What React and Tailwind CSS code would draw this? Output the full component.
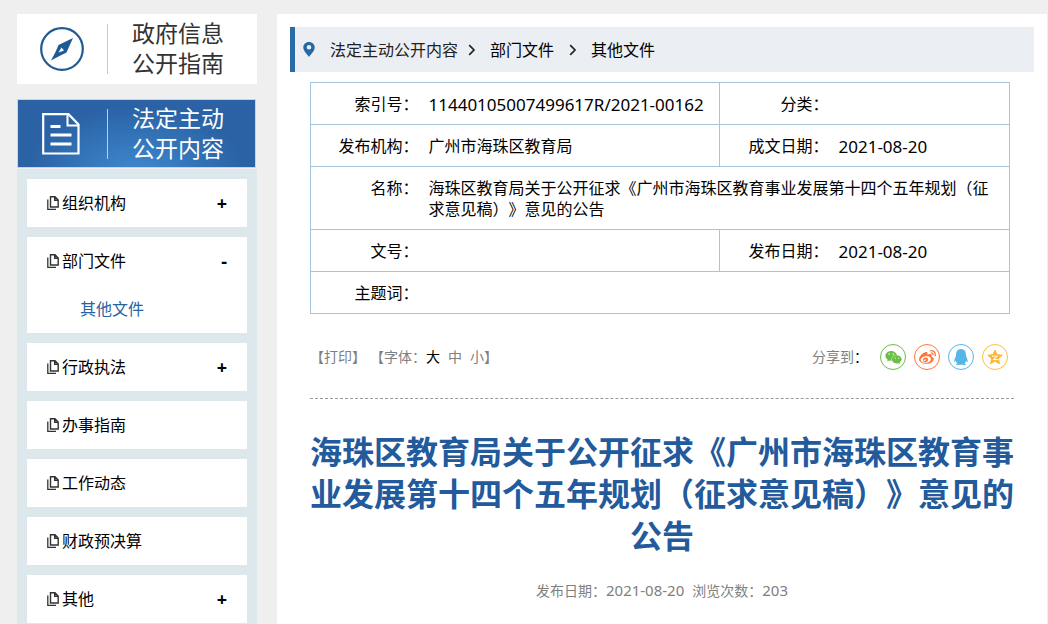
import React from "react";
import { FaQq, FaWeibo, FaWeixin } from "react-icons/fa";

const menu = [
  { label: "组织机构", sign: "+" },
  { label: "部门文件", sign: "-", children: ["其他文件"] },
  { label: "行政执法", sign: "+" },
  { label: "办事指南" },
  { label: "工作动态" },
  { label: "财政预决算" },
  { label: "其他", sign: "+" },
];

function CompassIcon() {
  return (
    <svg viewBox="0 0 44 44" className="h-11 w-11" aria-hidden="true">
      <circle cx="22" cy="22" r="20.8" fill="none" stroke="#1f5a93" strokeWidth="2.2" />
      <path
        fillRule="evenodd"
        fill="#1f5a93"
        d="M33 11 L26.500 25.5 L19.500 29 L11 33.5 L15.500 25 L18.500 18 Z M21.500 20.500 L18.500 25.500 L24 23.500 Z"
      />
    </svg>
  );
}

function DocumentIcon() {
  return (
    <svg viewBox="0 0 38 42" className="h-[42px] w-[38px]" fill="none" stroke="#fff" aria-hidden="true">
      <path strokeWidth="2.2" d="M1.200 1.200 H26.500 L36.500 11.500 V40.500 H1.200 Z" />
      <path strokeWidth="2" d="M25.500 1.500 V12.500 H36" />
      <path strokeWidth="3" d="M8.500 13.500 H18.500 M8.500 22 H29.500 M8.500 31 H29.500" />
    </svg>
  );
}

function CopyIcon() {
  return (
    <svg viewBox="0 0 12 14" className="h-3.5 w-3 shrink-0" fill="none" stroke="#333" aria-hidden="true">
      <path strokeWidth="1.400" d="M3.500 0.800 H8 L11.200 4 V11 H3.500 Z M7.700 0.800 V4.300 H11.200" />
      <path strokeWidth="1.300" d="M0.800 3.500 V13.300 H9" />
    </svg>
  );
}

function PinIcon() {
  return (
    <svg viewBox="0 0 12 15" className="h-[15px] w-3" aria-hidden="true">
      <path
        fill="#2568a5"
        fillRule="evenodd"
        d="M6 0 C2.700 0 0.300 2.400 0.300 5.500 C0.300 9 4 12 6 15 C8 12 11.700 9 11.700 5.500 C11.700 2.400 9.300 0 6 0 Z M6 3 A2.300 2.300 0 1 1 6 7.600 A2.300 2.300 0 1 1 6 3 Z"
      />
    </svg>
  );
}

function Chevron() {
  return (
    <svg viewBox="0 0 8 12" className="h-3 w-2" fill="none" stroke="#222" strokeWidth="1.700" aria-hidden="true">
      <path d="M1.200 1.200 L6 6 L1.200 10.800" />
    </svg>
  );
}

function QzoneIcon() {
  return (
    <svg viewBox="0 0 16 16" className="h-4 w-4" aria-hidden="true">
      <path
        fill="#fdb732"
        stroke="#fdb732"
        strokeLinejoin="round"
        d="M8 1 L10 5.700 L15.200 6.200 L11.300 9.700 L12.500 14.800 L8 12.100 L3.500 14.800 L4.700 9.700 L0.800 6.200 L6 5.700 Z"
      />
      <path fill="none" stroke="#fff" strokeWidth="1" d="M5 7.200 H10.400 L6.200 10.600 H11.500" />
    </svg>
  );
}

function MenuItem({ item }) {
  return (
    <li className="bg-white">
      <button type="button" className="flex h-12 w-full items-center gap-[3px] px-5 text-left text-black">
        <CopyIcon />
        <span className="flex-1">{item.label}</span>
        {item.sign && <span className="text-lg font-bold">{item.sign}</span>}
      </button>
      {item.children?.map((child) => (
        <a key={child} href="#child" className="flex h-12 items-center pl-[53px] text-[#2763a3]">
          {child}
        </a>
      ))}
    </li>
  );
}

function Field({ label, children, span, numeric }) {
  return (
    <>
      <th
        scope="row"
        className="border-y border-l border-[#a5c5de] pt-[11px] pb-[9px] text-right align-top font-normal"
      >
        {label}：
      </th>
      <td
        colSpan={span}
        className={`border-y border-r border-[#a5c5de] px-2.5 pt-[11px] pb-[9px] align-top ${numeric ? "text-[17px]" : ""}`}
      >
        {children}
      </td>
    </>
  );
}

function Share({ label, className, children }) {
  return (
    <a
      href="#share"
      aria-label={label}
      className={`flex h-[26px] w-[26px] items-center justify-center rounded-full border ${className}`}
    >
      {children}
    </a>
  );
}

export default function App() {
  return (
    <div className="flex min-h-screen gap-5 bg-[#efefef] pt-3.5 pr-px pl-[17px] font-['Noto_Sans','Noto_Sans_CJK_SC',sans-serif] text-base text-black [text-spacing-trim:space-all]">
      <aside className="flex w-60 shrink-0 flex-col">
        <a href="#guide" className="flex h-[70px] items-center bg-white text-[23px] leading-[30px] text-[#333]">
          <span className="flex w-[90px] justify-center">
            <CompassIcon />
          </span>
          <span className="h-[50px] w-px bg-[#c8c8c8]" />
          <span className="pb-0.5 pl-6">
            政府信息
            <br />
            公开指南
          </span>
        </a>
        <a
          href="#content"
          className="mt-[15px] mr-px flex h-[69px] items-center border border-[#c3d6ea] bg-[#2a62a5] bg-[radial-gradient(ellipse_at_50%_110%,#3f89cf_0%,#2a62a5_65%)] text-[23px] leading-[30px] text-white"
        >
          <span className="flex w-[89px] justify-center pr-1">
            <DocumentIcon />
          </span>
          <span className="h-[50px] w-px bg-[#b9d0e8]" />
          <span className="pb-0.5 pl-6">
            法定主动
            <br />
            公开内容
          </span>
        </a>
        <ul className="mt-px flex flex-1 flex-col gap-2.5 bg-[#dde8ed] px-2.5 pt-2.5">
          {menu.map((item) => (
            <MenuItem key={item.label} item={item} />
          ))}
        </ul>
      </aside>

      <main className="min-w-0 flex-1 bg-white px-[13px] pt-[13px]">
        <nav className="flex h-[45px] items-center border-l-[5px] border-[#2a6aa8] bg-[#ebeef2] pl-2 text-[#222]">
          <PinIcon />
          <a href="#a" className="ml-[15px]">
            法定主动公开内容
          </a>
          <span className="mr-3.5 ml-2.5">
            <Chevron />
          </span>
          <a href="#b" className="text-black">
            部门文件
          </a>
          <span className="mr-3.5 ml-[15px]">
            <Chevron />
          </span>
          <a href="#c" className="text-black">
            其他文件
          </a>
        </nav>

        <div className="px-5 pt-2.5">
          <div className="pr-1">
            <table className="w-full table-fixed border-collapse leading-[21px]">
              <colgroup>
                <col className="w-[108px]" />
                <col />
                <col className="w-[109px]" />
                <col className="w-[181px]" />
              </colgroup>
              <tbody>
                <tr>
                  <Field label="索引号" numeric>
                    11440105007499617R/2021-00162
                  </Field>
                  <Field label="分类" />
                </tr>
                <tr>
                  <Field label="发布机构">广州市海珠区教育局</Field>
                  <Field label="成文日期" numeric>
                    2021-08-20
                  </Field>
                </tr>
                <tr>
                  <Field label="名称" span={3}>
                    海珠区教育局关于公开征求《广州市海珠区教育事业发展第十四个五年规划（征求意见稿）》意见的公告
                  </Field>
                </tr>
                <tr>
                  <Field label="文号" />
                  <Field label="发布日期" numeric>
                    2021-08-20
                  </Field>
                </tr>
                <tr>
                  <Field label="主题词" span={3} />
                </tr>
              </tbody>
            </table>
          </div>

          <div className="mt-[30px] flex h-[55px] items-start justify-between border-b border-dashed border-[#999] pr-1.5 text-sm leading-[26px] text-[#808080]">
            <div className="flex">
              <button type="button">【打印】</button>
              <span className="ml-1">【字体：</span>
              <button type="button" className="text-black">
                大
              </button>
              <button type="button" className="mx-2">
                中
              </button>
              <button type="button">小</button>
              <span>】</span>
            </div>
            <div className="flex gap-2">
              <span className="mr-1">
                分享到<span className="text-black">：</span>
              </span>
              <Share label="微信" className="border-[#6cbd45] text-[#6cbd45]">
                <FaWeixin size={17} />
              </Share>
              <Share label="微博" className="border-[#ff763b] text-[#ff763b]">
                <FaWeibo size={17} />
              </Share>
              <Share label="QQ" className="border-[#56b6e7] text-[#56b6e7]">
                <FaQq size={16} />
              </Share>
              <Share label="QQ空间" className="border-[#fdbe3d]">
                <QzoneIcon />
              </Share>
            </div>
          </div>

          <h1 className="mt-8 text-center text-[32px] leading-[42px] font-bold text-[#225a9c]">
            海珠区教育局关于公开征求《广州市海珠区教育事业发展第十四个五年规划（征求意见稿）》意见的公告
          </h1>
          <p className="mt-[22px] flex justify-center gap-2 text-sm leading-[22px] text-[#808080]">
            <span>
              发布日期：<span className="text-[15px]">2021-08-20</span>
            </span>
            <span>
              浏览次数：<span className="text-[15px]">203</span>
            </span>
          </p>
        </div>
      </main>
    </div>
  );
}
